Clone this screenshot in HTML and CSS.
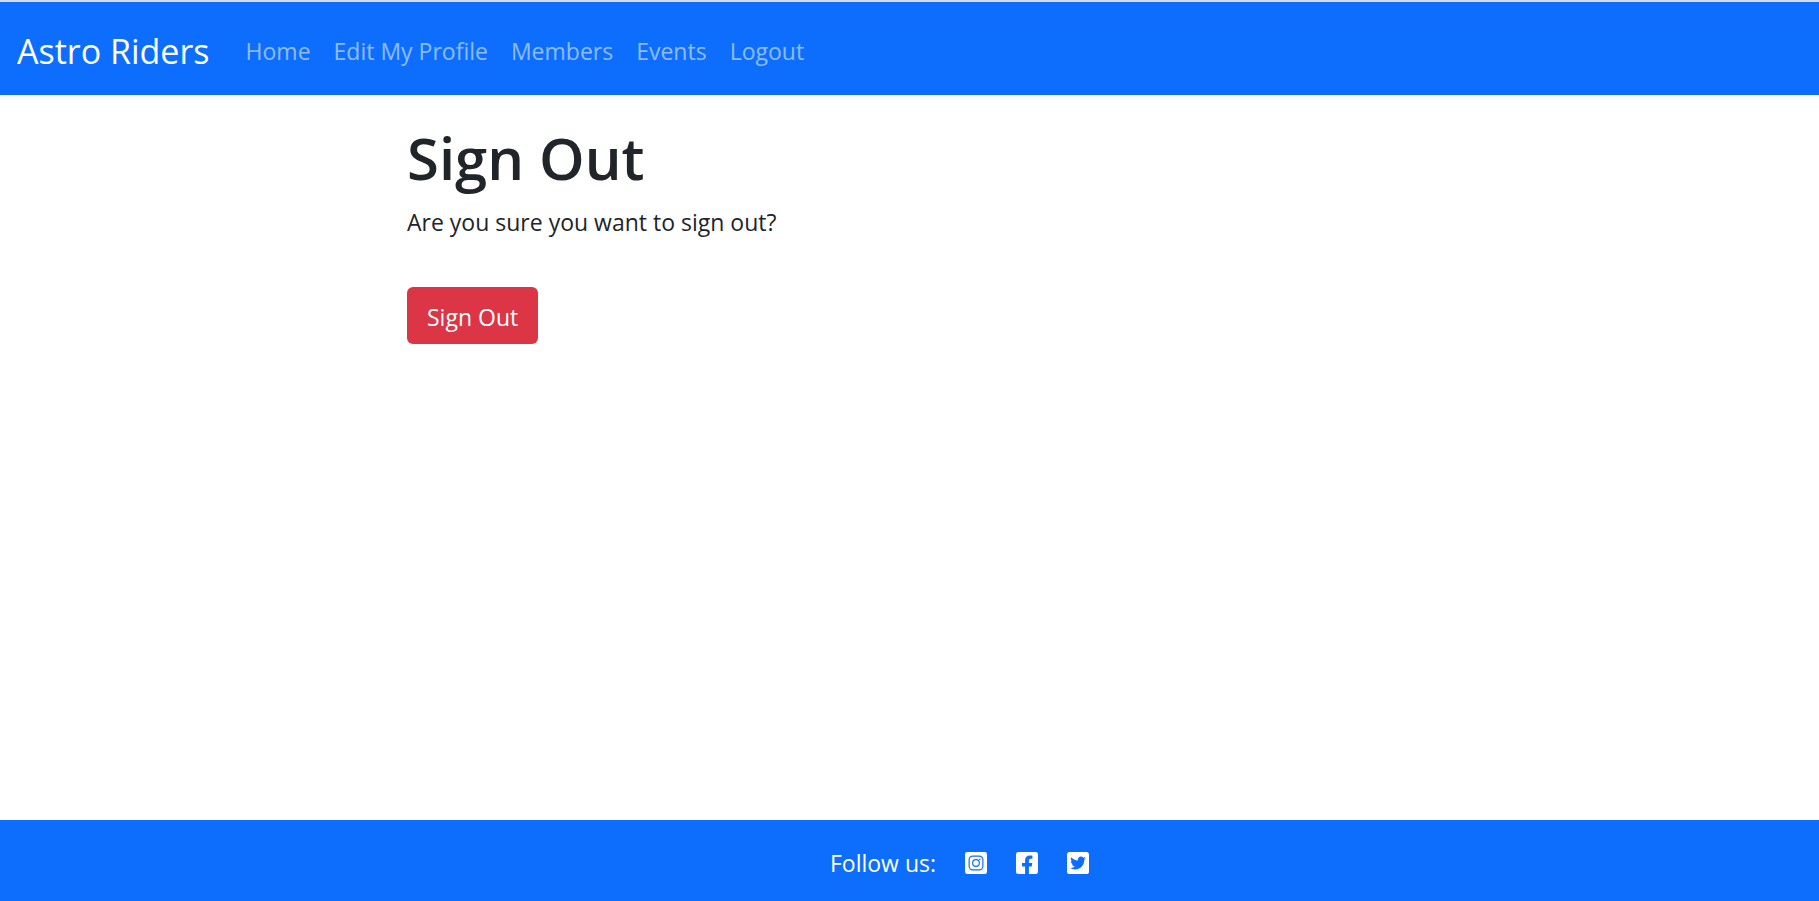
FILE: index.html
```html
<!DOCTYPE html>
<html lang="en">
<head>
  <meta charset="utf-8">
  <meta name="viewport" content="width=device-width, initial-scale=1">
  <title>Astro Riders</title>
  <link rel="stylesheet" href="styles.css">
</head>
<body class="page">
  <header class="navbar">
    <a class="brand" href="#">Astro Riders</a>
    <nav class="nav">
      <a class="nav-link" href="#">Home</a>
      <a class="nav-link" href="#">Edit My Profile</a>
      <a class="nav-link" href="#">Members</a>
      <a class="nav-link" href="#">Events</a>
      <a class="nav-link" href="#">Logout</a>
    </nav>
  </header>
  <main class="content">
    <h1 class="title">Sign Out</h1>
    <p class="question">Are you sure you want to sign out?</p>
    <form class="form">
      <button class="button" type="submit">Sign Out</button>
    </form>
  </main>
  <footer class="footer">
    <span class="follow">Follow us:</span>
    <a class="social" href="#" aria-label="Instagram">
      <svg class="icon" viewBox="0 32 448 448">
        <rect y="32" width="448" height="448" rx="48" fill="#fff"/>
        <g fill="none" stroke="#0d6efd" stroke-width="24">
          <rect x="84" y="116" width="280" height="280" rx="72"/>
          <circle cx="224" cy="256" r="68"/>
        </g>
        <circle cx="302" cy="178" r="16" fill="#0d6efd"/>
      </svg>
    </a>
    <a class="social" href="#" aria-label="Facebook">
      <svg class="icon" viewBox="0 32 448 448">
        <path fill="#fff" d="M400 32H48A48 48 0 0 0 0 80v352a48 48 0 0 0 48 48h137.25V327.69h-63V256h63v-54.64c0-62.15 37-96.48 93.67-96.48 27.14 0 55.52 4.84 55.52 4.84v61h-31.27c-30.81 0-40.42 19.12-40.42 38.73V256h68.78l-11 71.69h-57.78V480H400a48 48 0 0 0 48-48V80a48 48 0 0 0-48-48z"/>
      </svg>
    </a>
    <a class="social" href="#" aria-label="Twitter">
      <svg class="icon" viewBox="0 32 448 448">
        <path fill="#fff" d="M400 32H48C21.5 32 0 53.5 0 80v352c0 26.5 21.5 48 48 48h352c26.5 0 48-21.5 48-48V80c0-26.5-21.5-48-48-48zm-48.9 158.8c.2 2.8.2 5.7.2 8.5 0 86.7-66 186.6-186.6 186.6-37.2 0-71.7-10.8-100.7-29.4 5.3.6 10.4.8 15.8.8 30.7 0 58.9-10.4 81.4-28-28.8-.6-53-19.5-61.3-45.5 10.1 1.5 19.2 1.5 29.6-1.2-30-6.1-52.5-32.5-52.5-64.4v-.8c8.7 4.9 18.9 7.9 29.6 8.3a65.447 65.447 0 0 1-29.2-54.6c0-12.2 3.2-23.4 8.9-33.1 32.3 39.8 80.8 65.8 135.2 68.6-9.3-44.5 24-80.6 64-80.6 18.9 0 35.9 7.9 47.9 20.7 14.8-2.8 29-8.3 41.6-15.8-4.9 15.2-15.2 28-28.8 36.1 13.2-1.4 26-5.1 37.8-10.2-8.9 13.1-20.1 24.7-32.9 34z"/>
      </svg>
    </a>
  </footer>
</body>
</html>
```
FILE: styles.css
```css
* {
  box-sizing: border-box;
}

.page {
  display: flex;
  flex-direction: column;
  min-height: 100vh;
  margin: 0;
  border-top: 2px solid #d5dbe1;
  background: #fff;
  color: #212529;
  font: 23px/36px "Segoe UI", "Open Sans", "Noto Sans", sans-serif;
}

.navbar {
  display: flex;
  align-items: center;
  gap: 36px;
  padding: 22px 17px 17px;
  background: #0d6efd;
}

.brand {
  color: #fff;
  font-size: 34px;
  line-height: 54px;
  text-decoration: none;
}

.nav {
  display: flex;
  gap: 23px;
}

.nav-link {
  color: rgba(255, 255, 255, 0.55);
  text-decoration: none;
}

.content {
  flex: 1;
  width: 100%;
  max-width: 1005px;
  margin: 0 auto;
  padding-top: 27px;
}

.title {
  margin: 0 0 10px;
  font-size: 58px;
  font-weight: 600;
  line-height: 72px;
}

.question {
  margin: 0 0 47px;
}

.form {
  display: flex;
}

.button {
  padding: 12px 20px 9px;
  border: 0;
  border-radius: 6px;
  background: #dc3545;
  color: #fff;
  font: inherit;
}

.footer {
  display: flex;
  align-items: center;
  justify-content: center;
  gap: 29px;
  padding: 25px 0 20px 100px;
  background: #0d6efd;
  color: #fff;
}

.social {
  display: flex;
}

.icon {
  width: 22px;
  height: 22px;
}
```
